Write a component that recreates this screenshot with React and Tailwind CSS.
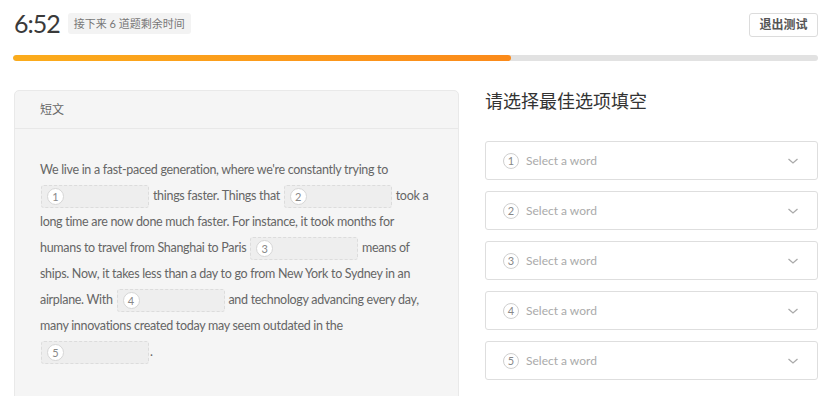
import React from "react";

const font = { fontFamily: "Lato, 'Noto Sans CJK SC', sans-serif" };

function Blank({ n }) {
  return (
    <span className="inline-flex items-center align-middle w-[108px] h-[23px] mx-[1px] rounded-[3px] border border-dashed border-[#dcdcdc] bg-[#eeeeee] pl-[5px]">
      <span className="flex items-center justify-center w-[17px] h-[17px] rounded-full bg-white border border-[#d6d6d6] text-[11px] text-[#888] leading-none tracking-normal">
        {n}
      </span>
    </span>
  );
}

function Select({ n }) {
  return (
    <div className="flex items-center h-[39px] rounded-[3px] border border-[#dedede] bg-white pl-[17px] pr-[18px]">
      <span className="flex items-center justify-center w-[16px] h-[16px] rounded-full border border-[#cfcfcf] text-[11px] text-[#888] leading-none">
        {n}
      </span>
      <span className="ml-[7px] text-[12px] text-[#aaa]">Select a word</span>
      <svg className="ml-auto" width="12" height="8" viewBox="0 0 12 8" fill="none">
        <path d="M1.5 2l4.5 4 4.5-4" stroke="#aaa" strokeWidth="1.3" />
      </svg>
    </div>
  );
}

export default function App() {
  return (
    <div className="w-[831px] h-[396px] overflow-hidden bg-white text-[#333]" style={font}>
      <div className="flex items-center justify-between pl-[14px] pr-[13px] pt-[8px]">
        <div className="flex items-center">
          <span className="text-[25px] leading-[30px] text-[#3a3a3a] tracking-[-1px]">6:52</span>
          <span className="ml-[8px] mt-[1px] rounded-[3px] bg-[#f3f3f3] px-[6px] py-[3px] text-[11px] leading-[15px] text-[#777]">
            接下来 6 道题剩余时间
          </span>
        </div>
        <button className="mt-[4px] h-[24px] w-[69px] rounded-[3px] border border-[#dcdcdc] bg-white text-[12px] font-bold text-[#555]">
          退出测试
        </button>
      </div>

      <div className="mx-[13px] mt-[17px] h-[6px] rounded-full bg-[#e2e2e2] overflow-hidden">
        <div className="h-full w-[498px] rounded-full bg-gradient-to-r from-[#fbac1c] to-[#fb8a1a]" />
      </div>

      <div className="flex gap-[26px] pl-[14px] pr-[13px] mt-[29px]">
        <div className="w-[445px] h-[320px] shrink-0 rounded-t-[5px] border border-[#e9e9e9] bg-[#f5f5f5]">
          <div className="h-[38px] flex items-center pl-[25px] border-b border-[#e8e8e8] text-[12px] text-[#666]">
            短文
          </div>
          <div className="pl-[25px] pr-[22px] pt-[28px] text-[12.5px] leading-[26px] tracking-[-0.3px] text-[#666]">
            We live in a fast-paced generation, where we're constantly trying to{" "}
            <Blank n={1} /> things faster. Things that <Blank n={2} /> took a long time are
            now done much faster. For instance, it took months for humans to travel from
            Shanghai to Paris <Blank n={3} /> means of ships. Now, it takes less than a day
            to go from New York to Sydney in an airplane. With <Blank n={4} /> and technology
            advancing every day, many innovations created today may seem outdated in the{" "}
            <Blank n={5} />.
          </div>
        </div>

        <div className="flex-1">
          <div className="text-[18px] leading-[24px] text-[#333] mt-[-1px]">请选择最佳选项填空</div>
          <div className="mt-[28px] flex flex-col gap-[11px]">
            <Select n={1} />
            <Select n={2} />
            <Select n={3} />
            <Select n={4} />
            <Select n={5} />
          </div>
        </div>
      </div>
    </div>
  );
}
